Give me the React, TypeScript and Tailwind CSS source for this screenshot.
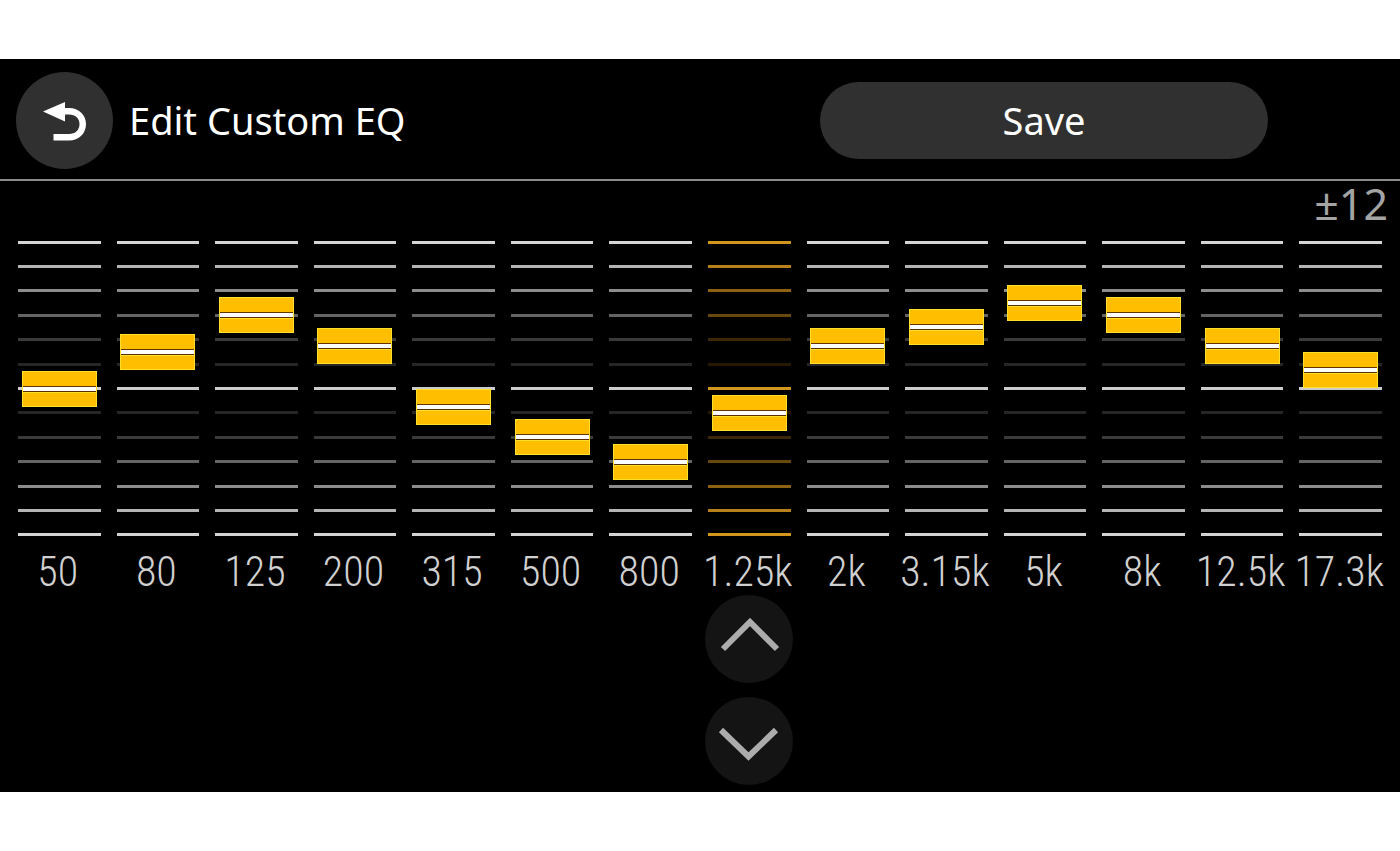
import React, { useState } from 'react';
import clsx from 'clsx';

const RANGE = 12;

// one grid line for every 2 dB, from +12 down to -12
const steps = [6, 5, 4, 3, 2, 1, 0, 1, 2, 3, 4, 5, 6];

const lineColors = ['bg-[#cccccc]', 'bg-[#262626]', 'bg-[#3a3a3a]', 'bg-[#646464]', 'bg-[#8c8c8c]', 'bg-[#b4b4b4]', 'bg-[#d4d4d4]'];
const activeLineColors = ['bg-[#d2961c]', 'bg-[#281a02]', 'bg-[#3c2806]', 'bg-[#68480c]', 'bg-[#8c6212]', 'bg-[#b88018]', 'bg-[#d2961c]'];

const initialBands = [
  { label: '50', value: 0 },
  { label: '80', value: 3 },
  { label: '125', value: 6 },
  { label: '200', value: 3.5 },
  { label: '315', value: -1.5 },
  { label: '500', value: -4 },
  { label: '800', value: -6 },
  { label: '1.25k', value: -2 },
  { label: '2k', value: 3.5 },
  { label: '3.15k', value: 5 },
  { label: '5k', value: 7 },
  { label: '8k', value: 6 },
  { label: '12.5k', value: 3.5 },
  { label: '17.3k', value: 1.5 },
];

interface BandProps {
  label: string;
  value: number;
  active: boolean;
  onSelect: () => void;
  onChange: (value: number) => void;
}

const Band: React.FC<BandProps> = ({ label, value, active, onSelect, onChange }) => {
  const colors = active ? activeLineColors : lineColors;

  return (
    <div className="flex flex-col items-center min-w-0">
      <div className="grid w-full h-[329px]">
        <div className="col-start-1 row-start-1 self-center flex flex-col justify-between h-[296px]">
          {steps.map((step, i) => (
            <div key={i} className={clsx('h-[3px]', colors[step])} />
          ))}
        </div>
        <input
          id={`band-${label}`}
          type="range"
          min={-RANGE}
          max={RANGE}
          step={0.5}
          value={value}
          onFocus={onSelect}
          onChange={(e) => onChange(Number(e.target.value))}
          className="col-start-1 row-start-1 justify-self-center z-10 m-0 w-[75px] h-full appearance-none bg-transparent cursor-pointer [writing-mode:vertical-lr] [direction:rtl] [&::-webkit-slider-thumb]:appearance-none [&::-webkit-slider-thumb]:w-[75px] [&::-webkit-slider-thumb]:h-[36px] [&::-webkit-slider-thumb]:border [&::-webkit-slider-thumb]:border-[#ffe02a] [&::-webkit-slider-thumb]:bg-[linear-gradient(to_bottom,#ffbe00_14px,#7a4400_14px,#4a2600_15px,#ffffff_15px,#ffffff_19px,#5a2e00_19px,#5a2e00_20px,#ffe02a_20px,#ffe02a_21px,#ffbe00_21px)]"
        />
      </div>
      <label htmlFor={`band-${label}`} className="pr-[3px] font-['Roboto_Condensed','Noto_Sans',sans-serif] font-light text-[42px] leading-[38px] text-[#d0d0d0] whitespace-nowrap">
        {label}
      </label>
    </div>
  );
};

export default function App() {
  const [bands, setBands] = useState(initialBands);
  const [selected, setSelected] = useState(7);

  const setValue = (index: number, value: number) => {
    const next = Math.max(-RANGE, Math.min(RANGE, value));
    setBands(bands.map((band, i) => (i === index ? { ...band, value: next } : band)));
  };

  return (
    <div className="flex flex-col justify-center min-h-screen bg-white font-['Noto_Sans',sans-serif]">
      <main className="bg-black pb-[7px] overflow-hidden">
        <header className="flex items-center h-[122px] pt-[2px] pl-4 pr-[132px] border-b-2 border-[#8a8a8a]">
          <button aria-label="Back" className="flex items-center justify-center shrink-0 size-[97px] rounded-full bg-[#303030]">
            <svg viewBox="0 0 97 97" className="size-full" fill="none">
              <path d="M27 39.500L49 30V36H53C63 36 70 43 70 52C70 61.500 63 68.500 53 68.500H37.500V62H53C59.500 62 63.500 58 63.500 52C63.500 46.500 59.500 42.500 53 42.500H49V49.500Z" fill="#fff" />
            </svg>
          </button>
          <h1 className="ml-4 text-[38px] text-white whitespace-nowrap">Edit Custom EQ</h1>
          <button className="ml-auto w-[448px] h-[77px] rounded-full bg-[#303030] text-[38px] text-white">Save</button>
        </header>

        <div className="pr-3 h-[43px] text-right text-[43px] leading-[46px] text-[#a4a4a4]">±{RANGE}</div>

        <div className="grid grid-cols-14 gap-x-4 px-[18px]">
          {bands.map((band, i) => (
            <Band
              key={band.label}
              label={band.label}
              value={band.value}
              active={i === selected}
              onSelect={() => setSelected(i)}
              onChange={(value) => setValue(i, value)}
            />
          ))}
        </div>

        <div className="grid grid-cols-14 gap-x-4 px-[18px] mt-1">
          <div className="flex flex-col gap-[14px] justify-self-center" style={{ gridColumnStart: selected + 1 }}>
            <button aria-label="Up" onClick={() => setValue(selected, bands[selected].value + 0.5)} className="size-[88px] rounded-full bg-[#141414]">
              <svg viewBox="0 0 88 88" className="size-full" fill="none" stroke="#acacac" strokeWidth="6">
                <path d="M18 54L45 27L72 54" />
              </svg>
            </button>
            <button aria-label="Down" onClick={() => setValue(selected, bands[selected].value - 0.5)} className="size-[88px] rounded-full bg-[#141414]">
              <svg viewBox="0 0 88 88" className="size-full" fill="none" stroke="#acacac" strokeWidth="6">
                <path d="M16 33L43.500 59.500L71 33" />
              </svg>
            </button>
          </div>
        </div>
      </main>
    </div>
  );
}
